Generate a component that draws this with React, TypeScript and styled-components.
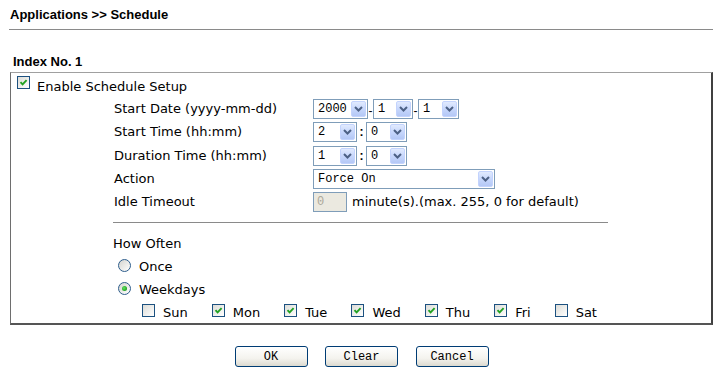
import React from "react";
import styled, { createGlobalStyle } from "styled-components";

const GlobalStyle = createGlobalStyle`
  html, body { margin: 0; padding: 0; background: #ffffff; }
  body {
    font-family: "DejaVu Sans", Verdana, sans-serif;
    font-size: 13px;
    color: #000000;
  }
`;

const Page = styled.div`
  width: 724px;
  height: 375px;
  box-sizing: border-box;
  padding: 0 11px 0 10px;
  overflow: hidden;
`;

const Title = styled.div`
  font-family: "Liberation Sans", Arial, sans-serif;
  font-weight: bold;
  font-size: 13px;
  line-height: 16px;
  height: 30px;
  box-sizing: border-box;
  padding-top: 7px;
  margin-left: -1px;
  padding-left: 1px;
  border-bottom: 1px solid #8a8a8a;
`;

const SectionTitle = styled.div`
  font-family: "Liberation Sans", Arial, sans-serif;
  font-weight: bold;
  font-size: 13px;
  line-height: 16px;
  margin-top: 24px;
  margin-bottom: 2px;
  padding-left: 3px;
`;

const Box = styled.div`
  border-top: 1px solid #a0a0a0;
  border-left: 1px solid #6e6e6e;
  border-right: 2px solid #404040;
  border-bottom: 2px solid #555555;
  padding: 3px 0 2px 0;
`;

const Row = styled.div<{ $indent: number; $top?: number }>`
  display: flex;
  align-items: flex-start;
  padding-left: ${(p) => p.$indent}px;
  margin-top: ${(p) => p.$top ?? 0}px;
`;

const Text = styled.span<{ $dy?: number; $gap?: number }>`
  display: block;
  line-height: 16px;
  white-space: nowrap;
  margin-top: ${(p) => p.$dy ?? 0}px;
  margin-left: ${(p) => p.$gap ?? 0}px;
`;

const Inner = styled.div`
  margin-left: 102px;
  width: 495px;
`;

const FormGrid = styled.div`
  display: grid;
  grid-template-columns: 200px auto;
  grid-auto-rows: 20px;
  row-gap: 3.25px;
  align-items: center;
  margin-top: 4px;
`;

const FieldLabel = styled.span`
  line-height: 16px;
  padding-left: 1px;
  white-space: nowrap;
`;

const Controls = styled.div`
  display: flex;
  align-items: center;
  height: 20px;
`;

const SelectBox = styled.div<{ $w: number }>`
  width: ${(p) => p.$w}px;
  height: 20px;
  box-sizing: border-box;
  border: 1px solid #7f9db9;
  background: #ffffff;
  display: flex;
  align-items: center;
  justify-content: space-between;
  font-family: "Liberation Mono", "Courier New", monospace;
  font-size: 12px;
  padding-left: 4px;
`;

const ArrowBtn = styled.span`
  width: 15px;
  height: 16px;
  margin: 1px;
  box-sizing: border-box;
  border: 1px solid #c3d3fd;
  border-radius: 2px;
  background: linear-gradient(#e1eafe 0%, #c7d7fc 50%, #b4c8f6 100%);
  display: flex;
  align-items: center;
  justify-content: center;
`;

const Sep = styled.span<{ $w: number; $bold?: boolean }>`
  width: ${(p) => p.$w}px;
  text-align: center;
  font-family: "Liberation Sans", Arial, sans-serif;
  font-size: 12px;
  font-weight: ${(p) => (p.$bold ? "bold" : "normal")};
  line-height: 16px;
  padding-top: ${(p) => (p.$bold ? 0 : 3)}px;
`;

const IdleInput = styled.div`
  width: 34px;
  height: 20px;
  box-sizing: border-box;
  border: 1px solid #7f9db9;
  background: #ebe9e0;
  color: #aca899;
  font-family: "Liberation Mono", monospace;
  font-size: 12px;
  line-height: 18px;
  padding-left: 3px;
`;

const Hint = styled.span`
  margin-left: 5px;
  line-height: 16px;
  white-space: nowrap;
`;

const Divider = styled.div`
  height: 0;
  border-top: 1px solid #8a8a8a;
  margin-top: 10px;
`;

const CheckBox = styled.span`
  flex: none;
  width: 13px;
  height: 13px;
  box-sizing: border-box;
  border: 1px solid #1c5180;
  background: linear-gradient(135deg, #dcdcd7 0%, #ffffff 100%);
  display: flex;
  align-items: center;
  justify-content: center;
`;

const RadioCircle = styled.span`
  flex: none;
  width: 13px;
  height: 13px;
  box-sizing: border-box;
  border: 1px solid #2d5d8c;
  border-radius: 50%;
  background: linear-gradient(135deg, #d5d4cf 0%, #ffffff 100%);
  display: flex;
  align-items: center;
  justify-content: center;
`;

const Dot = styled.span`
  width: 5px;
  height: 5px;
  border-radius: 50%;
  background: radial-gradient(circle at 40% 40%, #62e362 0%, #21a121 70%, #1a8a1a 100%);
`;

const Weekday = styled.div`
  display: flex;
  align-items: flex-start;
  margin-right: 24px;
`;

const ButtonRow = styled.div`
  display: flex;
  justify-content: center;
  gap: 17.5px;
  margin-top: 21px;
`;

const Button = styled.button`
  width: 73px;
  height: 21px;
  box-sizing: border-box;
  border: 1px solid #003c74;
  border-radius: 3px;
  background: linear-gradient(#ffffff 0%, #f4f3ee 60%, #dcdad0 100%);
  font-family: "Liberation Mono", "Courier New", monospace;
  font-size: 12px;
  color: #000;
  padding: 0;
`;

const Chevron = () => (
  <svg width="9" height="6" viewBox="0 0 9 6">
    <path d="M1 1 L4.5 4.5 L8 1" stroke="#4d6185" strokeWidth="2" fill="none" />
  </svg>
);

const Select = ({ w, value }: { w: number; value: string }) => (
  <SelectBox $w={w}>
    <span>{value}</span>
    <ArrowBtn>
      <Chevron />
    </ArrowBtn>
  </SelectBox>
);

const Check = ({ checked }: { checked?: boolean }) => (
  <CheckBox>
    {checked && (
      <svg width="9" height="9" viewBox="0 0 9 9">
        <path d="M1.5 4.2 L3.6 6.4 L7.6 2.2" stroke="#21a121" strokeWidth="1.9" fill="none" />
      </svg>
    )}
  </CheckBox>
);

const Radio = ({ checked }: { checked?: boolean }) => (
  <RadioCircle>{checked && <Dot />}</RadioCircle>
);

const days: { name: string; on: boolean }[] = [
  { name: "Sun", on: false },
  { name: "Mon", on: true },
  { name: "Tue", on: true },
  { name: "Wed", on: true },
  { name: "Thu", on: true },
  { name: "Fri", on: true },
  { name: "Sat", on: false },
];

export default function App() {
  return (
    <>
      <GlobalStyle />
      <Page>
        <Title>Applications &gt;&gt; Schedule</Title>
        <SectionTitle>Index No. 1</SectionTitle>
        <Box>
          <Row $indent={6}>
            <Check checked />
            <Text $dy={3} $gap={7}>Enable Schedule Setup</Text>
          </Row>
          <Inner>
            <FormGrid>
              <FieldLabel>Start Date (yyyy-mm-dd)</FieldLabel>
              <Controls>
                <Select w={55} value="2000" />
                <Sep $w={5}>-</Sep>
                <Select w={40} value="1" />
                <Sep $w={5}>-</Sep>
                <Select w={41} value="1" />
              </Controls>
              <FieldLabel>Start Time (hh:mm)</FieldLabel>
              <Controls>
                <Select w={44} value="2" />
                <Sep $w={9} $bold>:</Sep>
                <Select w={41} value="0" />
              </Controls>
              <FieldLabel>Duration Time (hh:mm)</FieldLabel>
              <Controls>
                <Select w={44} value="1" />
                <Sep $w={9} $bold>:</Sep>
                <Select w={41} value="0" />
              </Controls>
              <FieldLabel>Action</FieldLabel>
              <Controls>
                <Select w={182} value="Force On" />
              </Controls>
              <FieldLabel>Idle Timeout</FieldLabel>
              <Controls>
                <IdleInput>0</IdleInput>
                <Hint>minute(s).(max. 255, 0 for default)</Hint>
              </Controls>
            </FormGrid>
            <Divider />
            <Text $dy={13}>How Often</Text>
            <Row $indent={5} $top={7}>
              <Radio />
              <Text $gap={8}>Once</Text>
            </Row>
            <Row $indent={5} $top={7}>
              <Radio checked />
              <Text $gap={8}>Weekdays</Text>
            </Row>
            <Row $indent={29} $top={6}>
              {days.map((d) => (
                <Weekday key={d.name}>
                  <Check checked={d.on} />
                  <Text $dy={1} $gap={8}>{d.name}</Text>
                </Weekday>
              ))}
            </Row>
          </Inner>
        </Box>
        <ButtonRow>
          <Button>OK</Button>
          <Button>Clear</Button>
          <Button>Cancel</Button>
        </ButtonRow>
      </Page>
    </>
  );
}
